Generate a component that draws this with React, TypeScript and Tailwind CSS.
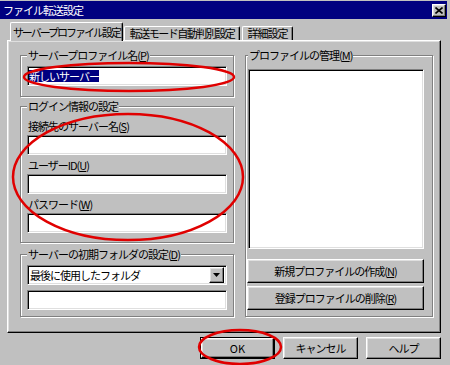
import type { ReactNode } from "react";

// Win95-style bevels
const raised =
  "border border-t-white border-l-white border-r-black border-b-black shadow-[inset_-1px_-1px_0_#808080,inset_1px_1px_0_#dfdfdf]";
const sunken =
  "border border-t-[#808080] border-l-[#808080] border-r-white border-b-white shadow-[inset_1px_1px_0_#000,inset_-1px_-1px_0_#dfdfdf] bg-white";

function Acc({ k }: { k: string }) {
  return (
    <>
      (<span className="underline">{k}</span>)
    </>
  );
}

function GroupBox({
  label,
  labelLeft = "left-[6px]",
  className = "",
  children,
}: {
  label: ReactNode;
  labelLeft?: string;
  className?: string;
  children: ReactNode;
}) {
  return (
    <div
      className={`relative border border-[#808080] shadow-[inset_1px_1px_0_#fff,1px_1px_0_#fff] ${className}`}
    >
      <span
        className={`absolute -top-[8px] ${labelLeft} bg-[#c0c0c0] px-[1px] leading-[14px] whitespace-nowrap`}
      >
        {label}
      </span>
      {children}
    </div>
  );
}

function Field({ label, children }: { label?: ReactNode; children?: ReactNode }) {
  return (
    <div className="flex flex-col">
      {label && <div className="h-[14px] leading-[14px] pl-[1px]">{label}</div>}
      <div className={`${sunken} h-[20px] ${label ? "mt-[2px]" : ""} flex items-center pl-[1px]`}>
        {children}
      </div>
    </div>
  );
}

export default function App() {
  return (
    <div className="relative w-[450px] h-[365px] overflow-hidden bg-[#c0c0c0] pt-[1px] text-[11px] tracking-[-1px] text-black font-['Noto_Sans_CJK_JP','Noto_Sans_CJK_SC',sans-serif]">
      {/* Title bar */}
      <div className="w-[447px] h-[18px] bg-[#000080] flex items-center justify-between pl-[3px] pr-[1px]">
        <span className="text-white leading-[18px]">ファイル転送設定</span>
        <button className={`${raised} bg-[#c0c0c0] w-[14px] h-[13px] flex items-center justify-center`}>
          <svg width="8" height="7" viewBox="0 0 8 7">
            <path d="M0.5 0.5 L7.5 6.5 M7.5 0.5 L0.5 6.5" stroke="#000" strokeWidth="1.6" />
          </svg>
        </button>
      </div>

      {/* Tabs */}
      <div className="h-[21px] flex items-end pl-[10px]">
        <div className="relative z-10 -mb-[1px] h-[19px] w-[113px] bg-[#c0c0c0] border-t border-l border-white border-r border-r-black rounded-t-[2px] shadow-[inset_-1px_0_0_#808080] flex items-center justify-center tracking-[-2px]">
          サーバープロファイル設定
        </div>
        <div className="h-[14px] w-[116px] ml-[1px] border-t border-l border-white border-r border-r-black rounded-t-[2px] shadow-[inset_-1px_0_0_#808080] flex items-center justify-center tracking-[-1.5px]">
          転送モード自動判別設定
        </div>
        <div className="h-[14px] w-[51px] ml-[2px] border-t border-l border-white border-r border-r-black rounded-t-[2px] shadow-[inset_-1px_0_0_#808080] flex items-center justify-center">
          詳細設定
        </div>
      </div>

      {/* Tab panel */}
      <div className={`${raised} ml-[7px] w-[434px] h-[293px] pl-[12px] pt-[14px] flex gap-[11px]`}>
        <div className="w-[214px] flex flex-col">
          <GroupBox
            className="h-[42px] pt-[10px] px-[6px]"
            label={
              <>
                サーバープロファイル名<Acc k="P" />
              </>
            }
          >
            <Field>
              <span className="bg-[#000080] text-white leading-[12px]">新しいサーバー</span>
            </Field>
          </GroupBox>

          <GroupBox className="mt-[9px] h-[137px] pt-[12px] px-[6px]" label="ログイン情報の設定">
            <div className="flex flex-col gap-[3px]">
              <Field
                label={
                  <>
                    接続先のサーバー名<Acc k="S" />
                  </>
                }
              />
              <Field
                label={
                  <>
                    ユーザーID<Acc k="U" />
                  </>
                }
              />
              <Field
                label={
                  <>
                    パスワード<Acc k="W" />
                  </>
                }
              />
            </div>
          </GroupBox>

          <GroupBox
            className="mt-[11px] h-[63px] pt-[10px] px-[6px]"
            label={
              <>
                サーバーの初期フォルダの設定<Acc k="D" />
              </>
            }
          >
            <div className={`${sunken} h-[20px] flex items-center pl-[2px] pr-[2px]`}>
              <span className="flex-1">最後に使用したフォルダ</span>
              <div className={`${raised} bg-[#c0c0c0] w-[15px] h-[16px] flex items-center justify-center`}>
                <svg width="7" height="4" viewBox="0 0 7 4">
                  <polygon points="0,0 7,0 3.5,4" fill="#000" />
                </svg>
              </div>
            </div>
            <div className={`${sunken} h-[20px] mt-[5px]`} />
          </GroupBox>
        </div>

        <GroupBox
          className="w-[188px] h-[262px] pt-[13px] pl-[2px]"
          labelLeft="left-[2px]"
          label={
            <>
              プロファイルの管理<Acc k="M" />
            </>
          }
        >
          <div className={`${sunken} w-[176px] h-[180px]`} />
          <button className={`${raised} bg-[#c0c0c0] w-[177px] h-[24px] mt-[10px] -ml-[1px] flex items-center justify-center`}>
            新規プロファイルの作成<Acc k="N" />
          </button>
          <button className={`${raised} bg-[#c0c0c0] w-[177px] h-[24px] mt-[3px] -ml-[1px] flex items-center justify-center`}>
            登録プロファイルの削除<Acc k="R" />
          </button>
        </GroupBox>
      </div>

      {/* Dialog buttons */}
      <div className="mt-[4px] flex justify-end gap-[8px] pr-[9px]">
        <div className="border border-black">
          <button className={`${raised} bg-[#c0c0c0] w-[73px] h-[20px] flex items-center justify-center tracking-normal`}>
            OK
          </button>
        </div>
        <button className={`${raised} bg-[#c0c0c0] w-[75px] h-[22px] flex items-center justify-center`}>
          キャンセル
        </button>
        <button className={`${raised} bg-[#c0c0c0] w-[75px] h-[22px] flex items-center justify-center`}>
          ヘルプ
        </button>
      </div>

      {/* Red hand-drawn annotations */}
      <svg className="absolute inset-0 pointer-events-none" width="450" height="365">
        <ellipse cx="129" cy="77" rx="105" ry="14" fill="none" stroke="#e00000" strokeWidth="2.5" />
        <ellipse cx="128" cy="177" rx="115" ry="63" fill="none" stroke="#e00000" strokeWidth="2.5" />
        <ellipse cx="240" cy="347" rx="41" ry="17" fill="none" stroke="#e00000" strokeWidth="2.5" />
      </svg>
    </div>
  );
}
